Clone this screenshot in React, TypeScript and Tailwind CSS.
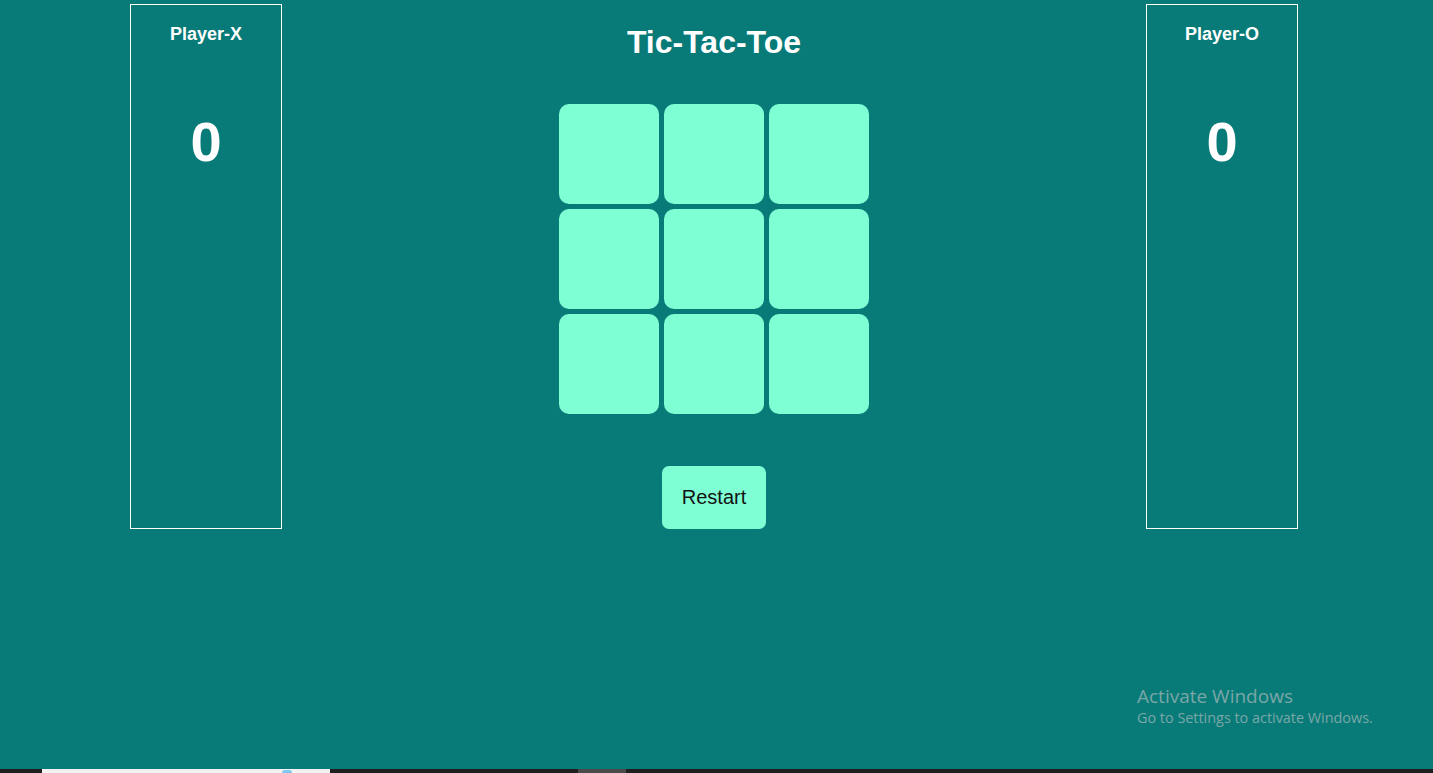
import { FunctionComponent } from "react"

const PlayerCard: FunctionComponent<{ name: string; score: number }> = ({ name, score }) => {
  return (
    <div className="mt-1 flex h-[525px] w-[152px] flex-col items-center border border-white">
      <h2 className="mt-5 text-[18px] font-bold leading-none text-white">{name}</h2>
      <p className="mt-[71px] text-[56px] font-bold leading-none text-white">{score}</p>
    </div>
  )
}

export default function App() {
  const cells = Array.from({ length: 9 })

  return (
    <div className="relative h-[773px] w-full overflow-hidden bg-[#087b79] font-['Liberation_Sans',Arial,sans-serif]">
      <div className="flex h-[769px] pl-[130px] pr-[135px]">
        <PlayerCard name="Player-X" score={0} />
        <div className="flex flex-1 flex-col items-center">
          <h1 className="mt-[26px] text-[32px] font-bold leading-none text-white">Tic-Tac-Toe</h1>
          <div className="mt-[46px] grid grid-cols-[100px_100px_100px] gap-[5px]">
            {cells.map((_, idx) => (
              <button key={idx} className="h-[100px] w-[100px] rounded-[10px] bg-[#7fffd4]" />
            ))}
          </div>
          <button className="mt-[52px] h-[63px] w-[104px] rounded-[7px] bg-[#7fffd4] pb-[2px] text-[20px] text-[#111]">
            Restart
          </button>
        </div>
        <PlayerCard name="Player-O" score={0} />
      </div>

      {/* windows watermark */}
      <div className="absolute left-[1137px] top-[684px] font-['Open_Sans',sans-serif] text-[#7aa7a6]">
        <div className="text-[19px] leading-[24px]">Activate Windows</div>
        <div className="text-[14.4px] leading-[20px]">Go to Settings to activate Windows.</div>
      </div>

      {/* taskbar edge */}
      <div className="flex h-[4px] bg-[#1f1f1f]">
        <div className="w-[42px]" />
        <div className="relative w-[288px] bg-[#f2f2f2]">
          <span className="absolute left-[240px] top-[1px] h-[3px] w-[10px] rounded-t-full bg-[#7cc8f0]" />
        </div>
        <div className="w-[248px]" />
        <div className="w-[48px] bg-[#4a4a4a]" />
      </div>
    </div>
  )
}
